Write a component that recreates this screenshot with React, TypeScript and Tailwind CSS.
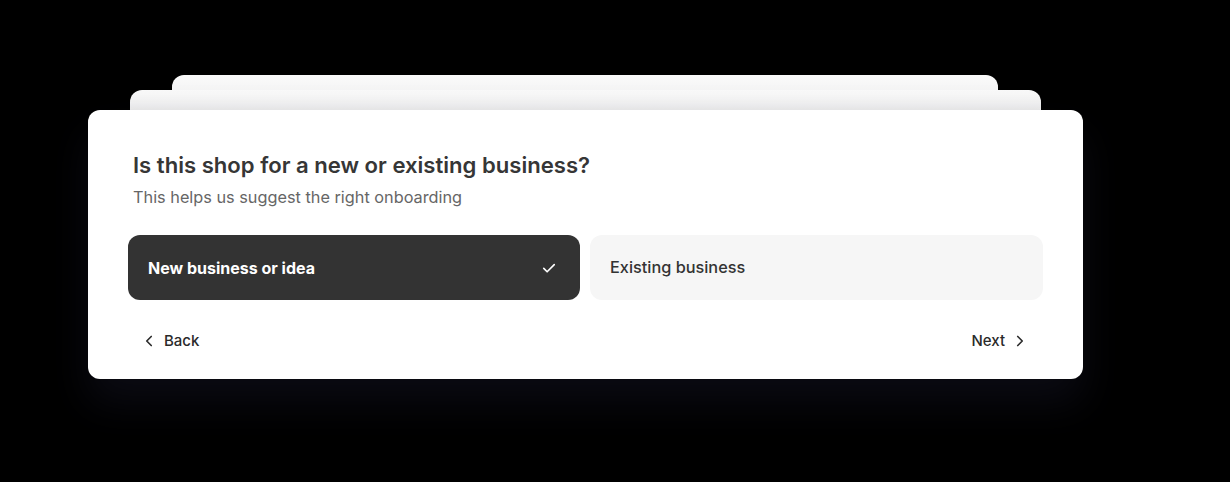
import React from "react";

function Check() {
  return (
    <svg width="18" height="18" viewBox="0 0 24 24" fill="none" stroke="currentColor" strokeWidth="2.2" strokeLinecap="round" strokeLinejoin="round">
      <path d="M5 12.5l4.5 4.5L19 7.5" />
    </svg>
  );
}
function ChevronLeft() {
  return (
    <svg width="18" height="18" viewBox="0 0 24 24" fill="none" stroke="currentColor" strokeWidth="2.2" strokeLinecap="round" strokeLinejoin="round">
      <path d="M15 18l-6-6 6-6" />
    </svg>
  );
}
function ChevronRight() {
  return (
    <svg width="18" height="18" viewBox="0 0 24 24" fill="none" stroke="currentColor" strokeWidth="2.2" strokeLinecap="round" strokeLinejoin="round">
      <path d="M9 18l6-6-6-6" />
    </svg>
  );
}

export default function App() {
  return (
    <div className="w-[1230px] h-[482px] bg-black overflow-hidden" style={{ fontFamily: "Inter, 'Noto Sans', sans-serif" }}>
      <div className="pt-[110px] pl-[88px]">
        <div className="relative w-[995px]">
          <div className="absolute left-[84px] right-[85px] top-[-35px] h-[60px] rounded-[12px] bg-gradient-to-b from-[#fafafa] to-[#e6e6e8]" />
          <div className="absolute left-[42px] right-[42px] top-[-20px] h-[60px] rounded-[12px] bg-gradient-to-b from-[#fafafa] to-[#e4e4e6]" />
          <div className="relative bg-white rounded-[12px] h-[269px] px-10 pt-[40px] shadow-[0_24px_40px_rgba(20,20,35,0.55)]">
            <div className="pl-[5px]">
              <h1 className="text-[22.1px] leading-[30px] font-semibold text-[#363636]">Is this shop for a new or existing business?</h1>
              <p className="text-[16.3px] leading-[24px] text-[#666] mt-[5px]">This helps us suggest the right onboarding</p>
            </div>
            <div className="flex gap-[10px] mt-[26px]">
              <div className="w-[452px] h-[65px] rounded-[12px] bg-[#333333] text-white flex items-center justify-between pl-5 pr-[22px]">
                <span className="text-[16px] font-bold">New business or idea</span>
                <Check />
              </div>
              <div className="flex-1 h-[65px] rounded-[12px] bg-[#f6f6f6] text-[#333] flex items-center px-5">
                <span className="text-[16.3px] font-medium">Existing business</span>
              </div>
            </div>
            <div className="flex justify-between items-center mt-[30px] pl-[12px] pr-[14px] text-[15px] font-medium text-[#2a2a2a]">
              <div className="flex items-center gap-[6px]">
                <ChevronLeft />
                <span>Back</span>
              </div>
              <div className="flex items-center gap-[6px]">
                <span>Next</span>
                <ChevronRight />
              </div>
            </div>
          </div>
        </div>
      </div>
    </div>
  );
}
